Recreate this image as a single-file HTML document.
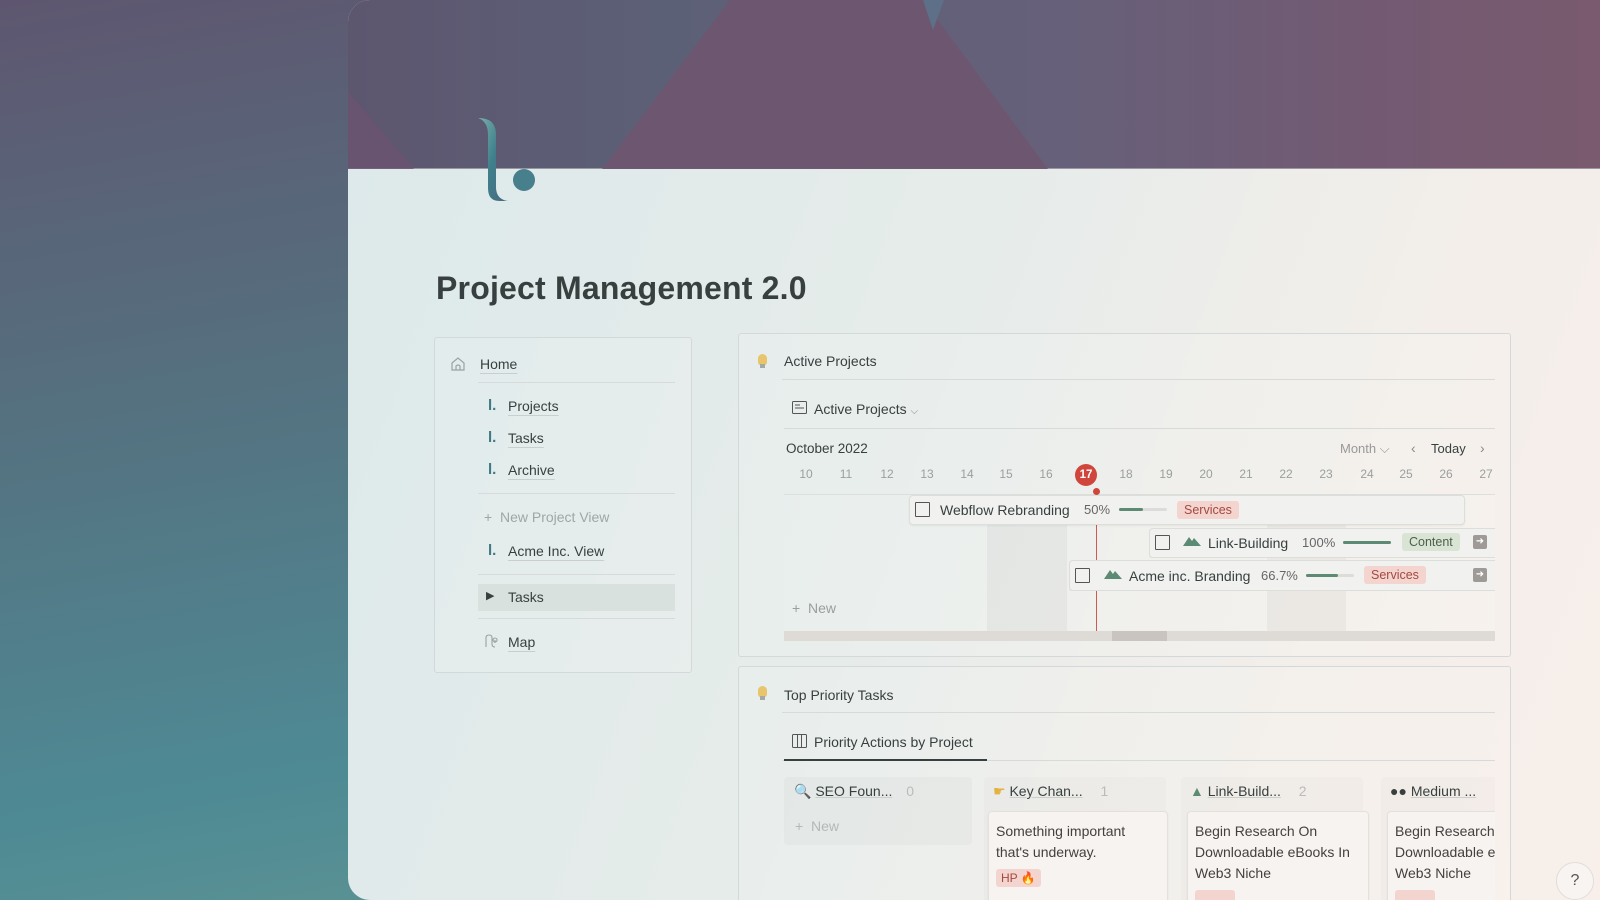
<!DOCTYPE html>
<html style="background:#4e8a94"><head><meta charset="utf-8">
<style>
*{margin:0;padding:0;box-sizing:border-box}
html,body{width:1600px;height:900px;overflow:hidden}
body{position:relative;font-family:"Liberation Sans","DejaVu Sans",sans-serif;background:linear-gradient(170deg,#5e5670 0%,#55707f 35%,#4e8a94 70%,#6a9a92 100%);}
.a{position:absolute}
#card{left:348px;top:0;width:1280px;height:900px;border-radius:22px;overflow:hidden;background:linear-gradient(110deg,#dce9ea 0%,#e6ecea 45%,#f3eeea 75%,#f8efea 100%)}
#hdr{left:0;top:0;width:1280px;height:169px;background:linear-gradient(90deg,#5d566f 0%,#5c6077 25%,#66607a 55%,#735a72 80%,#7a5a6e 100%);border-bottom:1px solid #9a97a0}
.t{color:#37403f;font-size:14px;white-space:nowrap}
.box{border:1px solid #d3d9d8;border-radius:3px;background:rgba(255,255,255,.12)}
.hl{height:1px;background:#d6dbd9}
.nv{position:absolute;font-size:14px;color:#37403f;text-decoration:underline;text-decoration-color:#c9cfcd;text-underline-offset:4px}
.lg{position:absolute;color:#3f7a84;font-weight:bold;font-size:15px}
.dt{position:absolute;top:467px;font-size:12px;color:#9aa09e;width:24px;text-align:center}
.bar{position:absolute;background:#f1f2f0;border:1px solid #dcdedb;border-radius:4px;box-shadow:0 1px 2px rgba(0,0,0,.06)}
.cb{position:absolute;width:15px;height:15px;border:1.5px solid #555;border-radius:1px}
.tag{position:absolute;font-size:12.5px;padding:2px 7px;border-radius:3px}
.pb{position:absolute;height:3px;background:#dcdcda;border-radius:2px}
.pb i{display:block;height:3px;background:#5d8a72;border-radius:2px}
.col{position:absolute;border-radius:4px}
.kc{position:absolute;height:120px;background:#f6f3f1;border:1px solid #e4e0dd;border-radius:4px;box-shadow:0 1px 2px rgba(0,0,0,.05);padding:9px 7px;font-size:14px;line-height:21px;color:#44403f;overflow:hidden;white-space:nowrap}
</style></head><body>
<div id="card" class="a">
 <div id="hdr" class="a">
  <svg class="a" style="left:0;top:0" width="1280" height="169">
   <polygon points="0,92 0,169 66,169" fill="#6c5470" opacity=".8"/>
   <polygon points="254,169 382,0 575,0 700,169" fill="#6e5670" opacity=".95"/>
   <polygon points="575,0 596,0 585,30" fill="#5d7088"/>
  </svg>
 </div>
 <svg class="a" style="left:128px;top:117px" width="64" height="86" viewBox="0 0 64 86">
  <defs><linearGradient id="lg1" x1="0" y1="0" x2="1" y2="1"><stop offset="0" stop-color="#7ab0ad"/><stop offset=".5" stop-color="#3f7f8b"/><stop offset="1" stop-color="#4a6a80"/></linearGradient></defs>
  <path d="M2 1 C14 1 20 6 20 18 L20 70 C20 78 24 83 32 84 L24 84 C14 84 12 78 12 70 L12 18 C12 8 8 3 2 1Z" fill="url(#lg1)"/>
  <circle cx="48" cy="63" r="11" fill="#477f8c"/>
 </svg>
</div>

<div class="a" style="left:436px;top:270px;font-size:32px;font-weight:bold;color:#37403f;letter-spacing:.2px">Project Management 2.0</div>

<!-- nav -->
<div class="a box" style="left:434px;top:337px;width:258px;height:336px"></div>
<svg class="a" style="left:450px;top:356px" width="16" height="16" viewBox="0 0 16 16"><path d="M2 7 L8 2 L14 7 L14 14 L2 14Z M6 14 L6 10 Q8 8 10 10 L10 14" fill="none" stroke="#9aa3a3" stroke-width="1.2"/></svg>
<div class="nv" style="left:480px;top:356px">Home</div>
<div class="a hl" style="left:478px;top:382px;width:197px"></div>
<div class="lg" style="left:488px;top:397px">l.</div><div class="nv" style="left:508px;top:398px">Projects</div>
<div class="lg" style="left:488px;top:429px">l.</div><div class="nv" style="left:508px;top:430px">Tasks</div>
<div class="lg" style="left:488px;top:461px">l.</div><div class="nv" style="left:508px;top:462px">Archive</div>
<div class="a hl" style="left:478px;top:493px;width:197px"></div>
<div class="a t" style="left:484px;top:509px;color:#a0a6a5">+ &nbsp;New Project View</div>
<div class="lg" style="left:488px;top:542px">l.</div><div class="nv" style="left:508px;top:543px">Acme Inc. View</div>
<div class="a hl" style="left:478px;top:574px;width:197px"></div>
<div class="a" style="left:478px;top:584px;width:197px;height:27px;background:#d8e1dd"></div>
<div class="a t" style="left:486px;top:589px;font-size:11px">▶</div>
<div class="a t" style="left:508px;top:589px">Tasks</div>
<div class="a hl" style="left:478px;top:618px;width:197px"></div>
<svg class="a" style="left:484px;top:634px" width="14" height="14"><path d="M2 13 V4 Q2 1 5 1 Q8 1 8 4 V10 Q8 13 11 13 M11 4 a2 2 0 1 0 .1 0 M11 6 V9" fill="none" stroke="#9aa3a3" stroke-width="1.1"/></svg>
<div class="nv" style="left:508px;top:634px">Map</div>

<!-- active projects -->
<div class="a box" style="left:738px;top:333px;width:773px;height:324px"></div>
<div class="a" style="left:758px;top:354px;width:9px;height:11px;border-radius:5px 5px 3px 3px;background:#e8c46a"></div>
<div class="a" style="left:760px;top:364px;width:5px;height:4px;background:#a3a8a8"></div>
<div class="a t" style="left:784px;top:353px">Active Projects</div>
<div class="a hl" style="left:782px;top:379px;width:713px"></div>
<svg class="a" style="left:792px;top:401px" width="15" height="13"><rect x=".5" y=".5" width="14" height="12" rx="1" fill="none" stroke="#555" /><path d="M3 4h5M3 7h9" stroke="#555"/></svg>
<div class="a t" style="left:814px;top:401px">Active Projects <span style="color:#888;font-size:10px">⌵</span></div>
<div class="a hl" style="left:784px;top:428px;width:711px"></div>
<div class="a t" style="left:786px;top:441px;font-size:13.5px">October 2022</div>
<div class="a t" style="left:1340px;top:441px;color:#999;font-size:13px">Month ⌵</div>
<div class="a t" style="left:1411px;top:440px;color:#888">‹</div>
<div class="a t" style="left:1431px;top:441px;font-size:13px">Today</div>
<div class="a t" style="left:1480px;top:440px;color:#888">›</div>
<div class="dt" style="left:794px">10</div><div class="dt" style="left:834px">11</div><div class="dt" style="left:875px">12</div><div class="dt" style="left:915px">13</div><div class="dt" style="left:955px">14</div><div class="dt" style="left:994px">15</div><div class="dt" style="left:1034px">16</div>
<div class="a" style="left:1075px;top:464px;width:22px;height:22px;border-radius:11px;background:#d0463c;color:#fff;font-size:11.5px;font-weight:bold;text-align:center;line-height:22px">17</div>
<div class="dt" style="left:1114px">18</div><div class="dt" style="left:1154px">19</div><div class="dt" style="left:1194px">20</div><div class="dt" style="left:1234px">21</div><div class="dt" style="left:1274px">22</div><div class="dt" style="left:1314px">23</div><div class="dt" style="left:1355px">24</div><div class="dt" style="left:1394px">25</div><div class="dt" style="left:1434px">26</div><div class="dt" style="left:1474px">27</div>
<div class="a" style="left:784px;top:494px;width:711px;height:137px;border-top:1px solid #dcdfdc;background:rgba(255,255,255,.08)"></div>
<div class="a" style="left:987px;top:495px;width:80px;height:136px;background:rgba(0,0,0,.035)"></div>
<div class="a" style="left:1267px;top:495px;width:79px;height:136px;background:rgba(0,0,0,.035)"></div>
<div class="a" style="left:1096px;top:495px;width:1px;height:136px;background:#cf5a52"></div>
<div class="a" style="left:1093px;top:488px;width:7px;height:7px;border-radius:4px;background:#d0463c"></div>
<div class="a" style="left:784px;top:631px;width:711px;height:10px;background:#dedad6"></div>
<div class="a" style="left:1112px;top:631px;width:55px;height:10px;background:#c9c4bf"></div>

<div class="bar" style="left:909px;top:495px;width:556px;height:30px"></div>
<div class="cb" style="left:915px;top:502px"></div>
<div class="a t" style="left:940px;top:502px">Webflow Rebranding</div>
<div class="a t" style="left:1084px;top:502px;color:#666;font-size:13px">50%</div>
<div class="pb" style="left:1119px;top:508px;width:48px"><i style="width:24px"></i></div>
<div class="tag" style="left:1177px;top:501px;background:#f4d4cf;color:#a34a40">Services</div>

<div class="a" style="left:1149px;top:528px;width:346px;height:30px;overflow:hidden"><div class="bar" style="left:0;top:0;width:400px;height:30px"></div></div>
<div class="cb" style="left:1155px;top:535px"></div>
<svg class="a" style="left:1183px;top:536px" width="18" height="10"><path d="M0 10 L6 1 L9 5 L11 2 L18 10Z" fill="#5d8a72"/></svg>
<div class="a t" style="left:1208px;top:535px">Link-Building</div>
<div class="a t" style="left:1302px;top:535px;color:#666;font-size:13px">100%</div>
<div class="pb" style="left:1343px;top:541px;width:48px"><i style="width:48px"></i></div>
<div class="tag" style="left:1402px;top:533px;background:#d9e4d4;color:#4c5f4c">Content</div>
<div class="a" style="left:1473px;top:535px;width:14px;height:14px;border-radius:2px;background:#9d9a97;color:#fff;font-size:10px;text-align:center;line-height:14px">➜</div>

<div class="a" style="left:1069px;top:560px;width:426px;height:31px;overflow:hidden"><div class="bar" style="left:0;top:0;width:480px;height:31px"></div></div>
<div class="cb" style="left:1075px;top:568px"></div>
<svg class="a" style="left:1104px;top:569px" width="18" height="10"><path d="M0 10 L6 1 L9 5 L11 2 L18 10Z" fill="#5d8a72"/></svg>
<div class="a t" style="left:1129px;top:568px">Acme inc. Branding</div>
<div class="a t" style="left:1261px;top:568px;color:#666;font-size:13px">66.7%</div>
<div class="pb" style="left:1306px;top:574px;width:48px"><i style="width:32px"></i></div>
<div class="tag" style="left:1364px;top:566px;background:#f4d4cf;color:#a34a40">Services</div>
<div class="a" style="left:1473px;top:568px;width:14px;height:14px;border-radius:2px;background:#9d9a97;color:#fff;font-size:10px;text-align:center;line-height:14px">➜</div>
<div class="a t" style="left:792px;top:600px;color:#9a9f9d">+ &nbsp;New</div>

<!-- top priority -->
<div class="a box" style="left:738px;top:666px;width:773px;height:260px"></div>
<div class="a" style="left:758px;top:686px;width:9px;height:11px;border-radius:5px 5px 3px 3px;background:#e8c46a"></div>
<div class="a" style="left:760px;top:696px;width:5px;height:4px;background:#a3a8a8"></div>
<div class="a t" style="left:784px;top:687px">Top Priority Tasks</div>
<div class="a hl" style="left:782px;top:712px;width:713px"></div>
<div class="a" style="left:782px;top:730px;width:713px;height:200px;overflow:hidden">
 <svg class="a" style="left:10px;top:4px" width="15" height="14"><rect x=".5" y=".5" width="14" height="13" rx="1" fill="none" stroke="#555"/><path d="M5.5 1v12M9.5 1v12" stroke="#555"/></svg>
 <div class="a t" style="left:32px;top:4px">Priority Actions by Project</div>
 <div class="a hl" style="left:0;top:30px;width:713px"></div>
 <div class="a" style="left:2px;top:29px;width:203px;height:2px;background:#37403f"></div>
 <div class="col" style="left:2px;top:47px;width:188px;height:68px;background:rgba(0,0,0,.025)"></div>
 <div class="a t" style="left:12px;top:53px">🔍 <u style="text-decoration-color:#c9cfcd">SEO Foun...</u> <span style="color:#bbb;margin-left:10px">0</span></div>
 <div class="a t" style="left:13px;top:88px;color:#b5b8b6">+ &nbsp;New</div>
 <div class="col" style="left:202px;top:47px;width:182px;height:160px;background:rgba(0,0,0,.015)"></div>
 <div class="a t" style="left:211px;top:53px"><span style="color:#e6b23f">☛</span> <u style="text-decoration-color:#c9cfcd">Key Chan...</u> <span style="color:#bbb;margin-left:14px">1</span></div>
 <div class="kc" style="left:206px;top:81px;width:180px">Something important<br>that's underway.<br><span style="display:inline-block;margin-top:6px;background:#f4d4cf;color:#a34a40;font-size:12px;line-height:18px;padding:0 5px;border-radius:3px">HP 🔥</span></div>
 <div class="col" style="left:399px;top:47px;width:182px;height:160px;background:rgba(0,0,0,.015)"></div>
 <div class="a t" style="left:408px;top:53px"><span style="color:#5d8a72">▲</span> <u style="text-decoration-color:#c9cfcd">Link-Build...</u> <span style="color:#bbb;margin-left:14px">2</span></div>
 <div class="kc" style="left:405px;top:81px;width:182px">Begin Research On<br>Downloadable eBooks In<br>Web3 Niche<br><span style="display:inline-block;margin-top:6px;background:#f4d4cf;width:40px;height:18px;border-radius:3px"></span></div>
 <div class="col" style="left:599px;top:47px;width:120px;height:160px;background:rgba(0,0,0,.015)"></div>
 <div class="a t" style="left:608px;top:53px">●● <u style="text-decoration-color:#c9cfcd">Medium ...</u></div>
 <div class="kc" style="left:605px;top:81px;width:140px">Begin Research<br>Downloadable e<br>Web3 Niche<br><span style="display:inline-block;margin-top:6px;background:#f4d4cf;width:40px;height:18px;border-radius:3px"></span></div>
</div>
<div class="a" style="left:1556px;top:862px;width:38px;height:38px;border-radius:19px;background:#f8f4f1;border:1px solid #e2ddd9;text-align:center;line-height:36px;color:#555;font-size:16px">?</div>
</body></html>
